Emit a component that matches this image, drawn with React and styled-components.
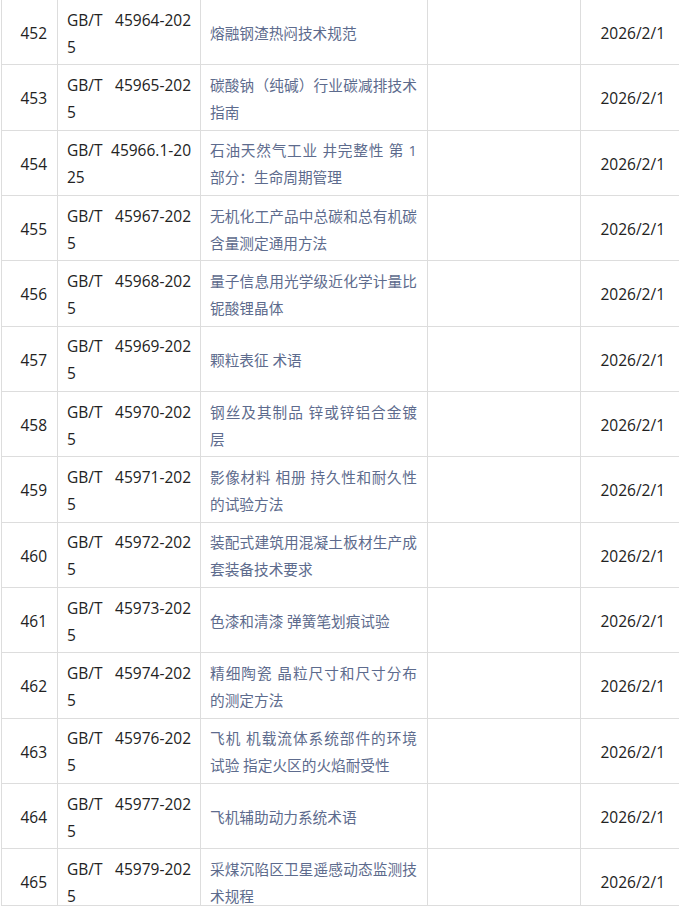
import React from 'react';
import styled, { createGlobalStyle } from 'styled-components';

const rows = [
  { no: 452, code: ['GB/T 45964-202', '5'], name: '熔融钢渣热闷技术规范' },
  { no: 453, code: ['GB/T 45965-202', '5'], name: '碳酸钠（纯碱）行业碳减排技术指南' },
  { no: 454, code: ['GB/T 45966.1-20', '25'], name: '石油天然气工业 井完整性 第 1 ', keep: '部分：生命周期管理' },
  { no: 455, code: ['GB/T 45967-202', '5'], name: '无机化工产品中总碳和总有机碳含量测定通用方法' },
  { no: 456, code: ['GB/T 45968-202', '5'], name: '量子信息用光学级近化学计量比铌酸锂晶体' },
  { no: 457, code: ['GB/T 45969-202', '5'], name: '颗粒表征 术语' },
  { no: 458, code: ['GB/T 45970-202', '5'], name: '钢丝及其制品 锌或锌铝合金镀层' },
  { no: 459, code: ['GB/T 45971-202', '5'], name: '影像材料 相册 持久性和耐久性的试验方法' },
  { no: 460, code: ['GB/T 45972-202', '5'], name: '装配式建筑用混凝土板材生产成套装备技术要求' },
  { no: 461, code: ['GB/T 45973-202', '5'], name: '色漆和清漆 弹簧笔划痕试验' },
  { no: 462, code: ['GB/T 45974-202', '5'], name: '精细陶瓷 晶粒尺寸和尺寸分布的测定方法' },
  { no: 463, code: ['GB/T 45976-202', '5'], name: '飞机 机载流体系统部件的环境试验 指定火区的火焰耐受性' },
  { no: 464, code: ['GB/T 45977-202', '5'], name: '飞机辅助动力系统术语' },
  { no: 465, code: ['GB/T 45979-202', '5'], name: '采煤沉陷区卫星遥感动态监测技术规程' },
];

const GlobalStyle = createGlobalStyle`
  html, body {
    margin: 0;
    padding: 0;
    background: #fff;
  }
  body {
    font-family: "Open Sans", "Noto Sans CJK SC", sans-serif;
  }
`;

const Table = styled.div`
  padding-left: 1px;
  width: 678px;
  overflow: hidden;
`;

const Row = styled.div`
  display: grid;
  grid-template-columns: 56px 143px 227px 153px 99px;
  grid-template-rows: 64.33px;
  box-sizing: border-box;
  height: ${(p) => (p.$cut ? '57px' : '65.33px')};
  overflow: hidden;
  border-bottom: 1px solid #dddddd;
`;

const Cell = styled.div`
  box-sizing: border-box;
  display: flex;
  align-items: center;
  justify-content: ${(p) => (p.$right ? 'flex-end' : 'flex-start')};
  border-left: 1px solid #dddddd;
  padding: ${(p) => p.$pad || '3px 9px 0'};
  font-size: ${(p) => (p.$cjk ? '14.667px' : '15.5px')};
  line-height: 27px;
  color: #222;
`;

const Code = styled.div`
  width: 100%;
  text-align: left;
  text-align-last: justify;
`;

const Name = styled.div`
  width: 100%;
  text-align: justify;
  color: #5d6b8d;
`;

const Keep = styled.span`
  white-space: nowrap;
`;

export default function App() {
  return (
    <>
      <GlobalStyle />
      <Table>
        {rows.map((r, i) => (
          <Row key={r.no} $cut={i === rows.length - 1}>
            <Cell $right $pad="3px 10px 0 0">{r.no}</Cell>
            <Cell>
              <Code>
                {r.code[0]}
                <br />
                {r.code[1]}
              </Code>
            </Cell>
            <Cell $cjk $pad="3px 10px 0 9px">
              <Name>
                {r.name}
                {r.keep && <Keep>{r.keep}</Keep>}
              </Name>
            </Cell>
            <Cell />
            <Cell $right $pad="3px 14px 0 0">2026/2/1</Cell>
          </Row>
        ))}
      </Table>
    </>
  );
}
